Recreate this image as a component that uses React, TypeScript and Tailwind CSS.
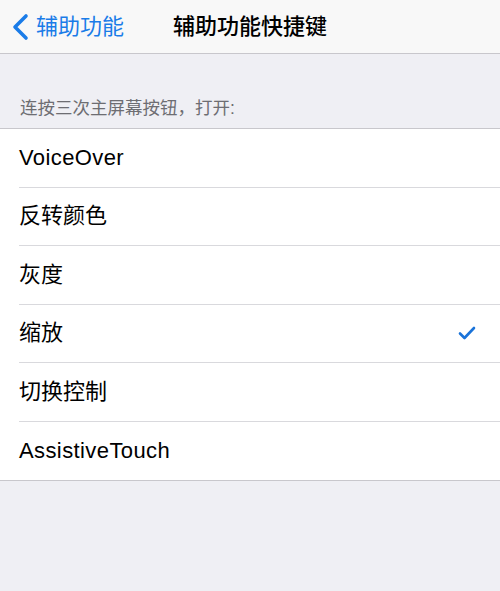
import React from 'react';

const items = [
  { label: 'VoiceOver', checked: false, latin: true },
  { label: '反转颜色', checked: false, latin: false },
  { label: '灰度', checked: false, latin: false },
  { label: '缩放', checked: true, latin: false },
  { label: '切换控制', checked: false, latin: false },
  { label: 'AssistiveTouch', checked: false, latin: true },
];

const font = { fontFamily: '"Liberation Sans", "Noto Sans CJK SC", sans-serif' };

export default function App() {
  return (
    <div className="w-[500px] h-[591px] bg-[#efeff4] overflow-hidden" style={font}>
      {/* Nav bar */}
      <div className="relative h-[54px] bg-[#f8f8f8] border-b border-[#c8c7cc] flex items-center">
        <div className="flex items-center pl-[11px] text-[#1a7ce8]">
          <svg width="18" height="28" viewBox="0 0 18 28" fill="none">
            <polyline points="15,3 4,14 15,25" stroke="currentColor" strokeWidth="3.6" strokeLinecap="round" strokeLinejoin="round" />
          </svg>
          <span className="ml-[7px] text-[22px] leading-none">辅助功能</span>
        </div>
        <div className="absolute left-0 right-0 top-0 bottom-0 flex items-center justify-center pointer-events-none">
          <span className="text-[22px] leading-none text-black font-medium">辅助功能快捷键</span>
        </div>
      </div>

      {/* Section header */}
      <div className="pt-[44px] pb-[10px] pl-[20px] text-[17.5px] leading-[20px] text-[#6d6d72]">
        连按三次主屏幕按钮，打开:
      </div>

      {/* List */}
      <div className="bg-white border-t border-b border-[#c8c7cc]">
        {items.map((item, idx) => (
          <div key={idx} className="pl-[19px]">
            <div
              className={`h-[58.5px] flex items-center justify-between pr-[24px] ${
                idx < items.length - 1 ? 'border-b border-[#d9d9dd]' : ''
              }`}
            >
              <span className={`text-[22px] leading-none text-black ${item.latin ? 'tracking-[0.4px]' : ''}`}>
                {item.label}
              </span>
              {item.checked && (
                <svg width="18" height="16" viewBox="0 0 18 16" fill="none">
                  <polyline points="2,8.5 6.5,13 16,3" stroke="#1a73d9" strokeWidth="2.6" strokeLinecap="round" strokeLinejoin="round" />
                </svg>
              )}
            </div>
          </div>
        ))}
      </div>
    </div>
  );
}
